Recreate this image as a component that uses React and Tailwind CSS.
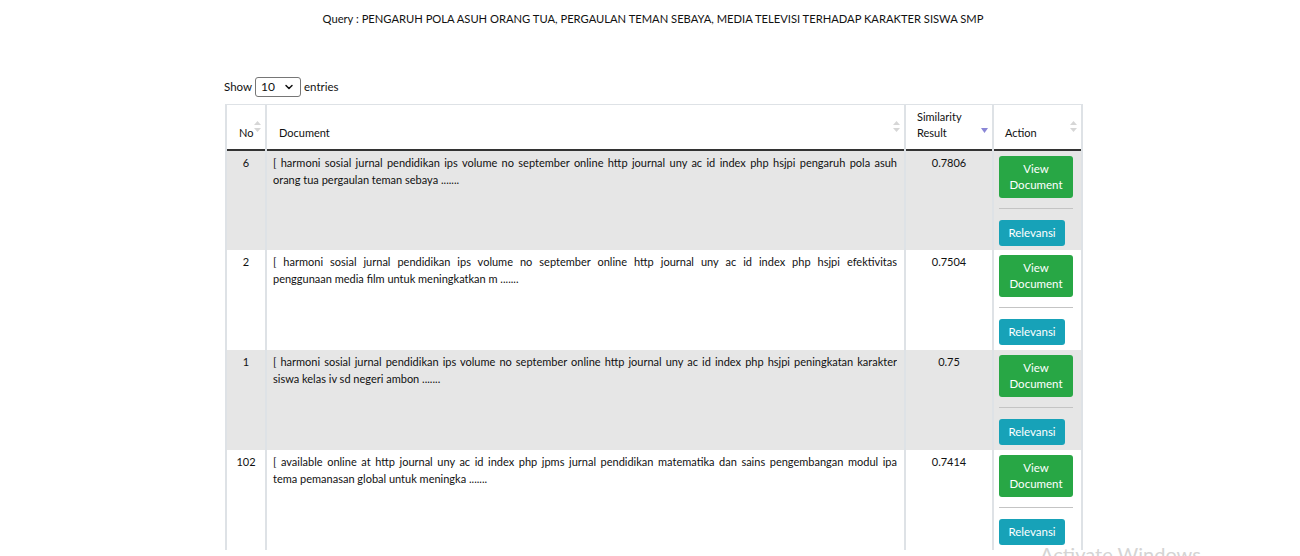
import React from 'react';
import { ChevronDown } from 'lucide-react';

const rows = [
  {
    no: 6,
    first: '[ harmoni sosial jurnal pendidikan ips volume no september online http journal uny ac id index php hsjpi pengaruh pola asuh',
    rest: 'orang tua pergaulan teman sebaya .......',
    score: '0.7806',
  },
  {
    no: 2,
    first: '[ harmoni sosial jurnal pendidikan ips volume no september online http journal uny ac id index php hsjpi efektivitas',
    rest: 'penggunaan media film untuk meningkatkan m .......',
    score: '0.7504',
  },
  {
    no: 1,
    first: '[ harmoni sosial jurnal pendidikan ips volume no september online http journal uny ac id index php hsjpi peningkatan karakter',
    rest: 'siswa kelas iv sd negeri ambon .......',
    score: '0.75',
  },
  {
    no: 102,
    first: '[ available online at http journal uny ac id index php jpms jurnal pendidikan matematika dan sains pengembangan modul ipa',
    rest: 'tema pemanasan global untuk meningka .......',
    score: '0.7414',
  },
];

const SortIcon = () => (
  <svg width="7" height="11" viewBox="0 0 7 11" className="absolute right-[4px] top-[16px]">
    <path d="M3.5 0 L7 4 H0 Z" fill="#d6d6d6" />
    <path d="M3.5 11 L7 7 H0 Z" fill="#d6d6d6" />
  </svg>
);

const SortDesc = () => (
  <svg width="7" height="5" viewBox="0 0 7 5" className="absolute right-[4px] top-[23px]">
    <path d="M0 0 H7 L3.5 5 Z" fill="#8a86d6" />
  </svg>
);

export default function App() {
  return (
    <div
      className="relative w-[1300px] h-[556px] overflow-hidden bg-white text-[#111]"
      style={{ fontFamily: 'Lato, "Open Sans", sans-serif' }}
    >
      <div className="pt-[11px] pl-[6px] text-center text-[11.2px] leading-[16px]">
        Query : PENGARUH POLA ASUH ORANG TUA, PERGAULAN TEMAN SEBAYA, MEDIA TELEVISI TERHADAP KARAKTER SISWA SMP
      </div>

      <div className="pl-[224px] mt-[50px] flex items-center gap-[3px] text-[11.5px]">
        <span>Show</span>
        <div className="w-[46px] h-[20px] border border-[#767676] rounded-[3px] flex items-center justify-between px-[5px] text-[12px]">
          <span>10</span>
          <ChevronDown size={12} strokeWidth={3} />
        </div>
        <span>entries</span>
      </div>

      <div className="pl-[225px] mt-[7px]">
        <table className="table-fixed w-[856px] border-collapse text-[11px]">
          <colgroup>
            <col className="w-[40px]" />
            <col className="w-[639px]" />
            <col className="w-[88px]" />
            <col className="w-[89px]" />
          </colgroup>
          <thead>
            <tr className="h-[45px] border-t border-[#dee2e6] border-b-2 border-b-[#333]">
              <th className="relative border-x-2 border-[#dee2e6] align-bottom text-left font-normal pl-[12px] pb-[8px] leading-[16px]">
                No
                <SortIcon />
              </th>
              <th className="relative border-x-2 border-[#dee2e6] align-bottom text-left font-normal pl-[12px] pb-[8px] leading-[16px]">
                Document
                <SortIcon />
              </th>
              <th className="relative border-x-2 border-[#dee2e6] align-bottom text-left font-normal pl-[11px] pb-[8px] leading-[16px]">
                Similarity
                <br />
                Result
                <SortDesc />
              </th>
              <th className="relative border-x-2 border-[#dee2e6] align-bottom text-left font-normal pl-[11px] pb-[8px] leading-[16px]">
                Action
                <SortIcon />
              </th>
            </tr>
          </thead>
          <tbody>
            {rows.map((r, i) => (
              <tr key={r.no} className={i % 2 === 0 ? 'bg-[#e6e6e6] h-[100px]' : 'bg-white h-[100px]'}>
                <td className="border-x-2 border-[#dee2e6] align-top text-center pt-[3px] leading-[17px]">{r.no}</td>
                <td className="border-x-2 border-[#dee2e6] align-top pt-[3px] pl-[6px] pr-[7px] leading-[17px]">
                  <div className="text-justify [text-align-last:justify] whitespace-nowrap overflow-hidden">
                    <div className="whitespace-normal">{r.first}</div>
                  </div>
                  <div>{r.rest}</div>
                </td>
                <td className="border-x-2 border-[#dee2e6] align-top text-center pt-[3px] leading-[17px]">{r.score}</td>
                <td className="border-x-2 border-[#dee2e6] align-top pt-[5px] pl-[5px]">
                  <button className="w-[74px] h-[42px] bg-[#28a745] text-white rounded-[3px] text-[11.5px] leading-[16px]">
                    View
                    <br />
                    Document
                  </button>
                  <div className="w-[74px] h-px bg-[#c4c4c4] mt-[10px] mb-[11px]" />
                  <button className="w-[66px] h-[26px] bg-[#17a2b8] text-white rounded-[3px] text-[11.5px] leading-[16px]">
                    Relevansi
                  </button>
                </td>
              </tr>
            ))}
          </tbody>
        </table>
      </div>

      <div className="absolute left-[1040px] top-[542px] text-[20px] leading-[24px] text-[#d4d4d4] whitespace-nowrap">
        Activate Windows
      </div>
    </div>
  );
}
